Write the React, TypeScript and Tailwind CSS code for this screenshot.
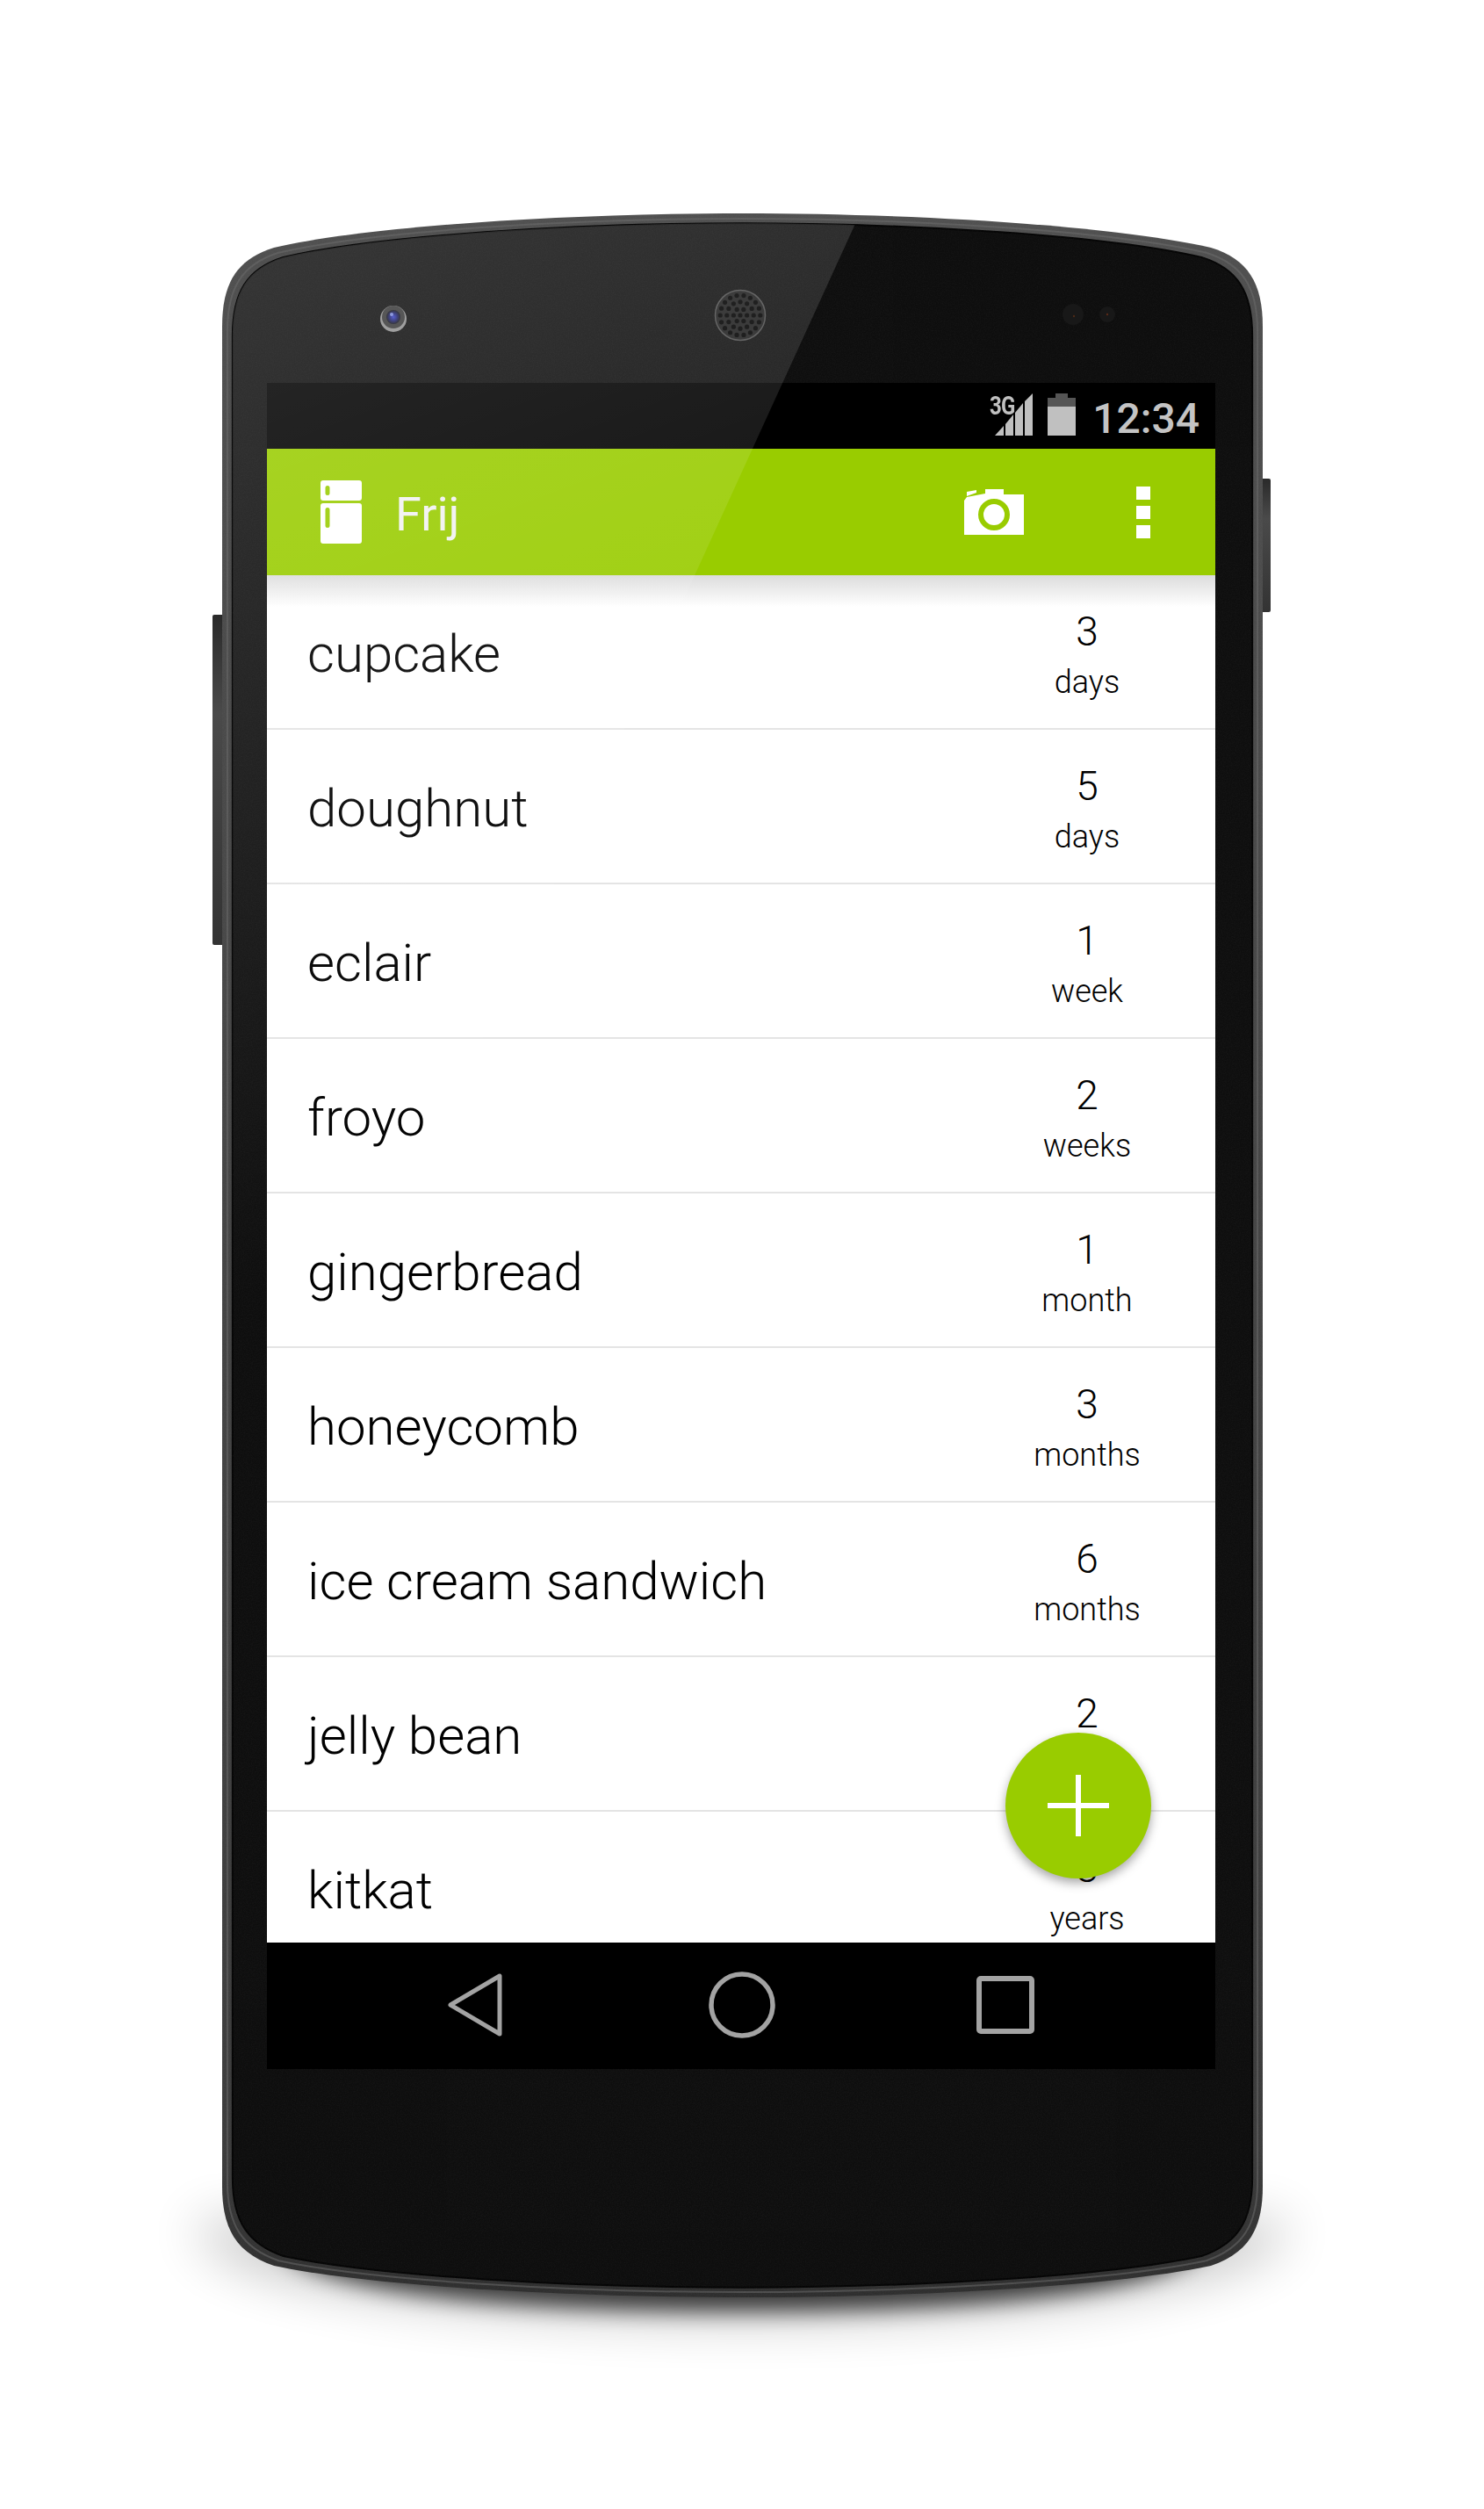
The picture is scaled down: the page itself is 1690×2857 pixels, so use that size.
const items = [
  { name: "cupcake", num: "3", unit: "days" },
  { name: "doughnut", num: "5", unit: "days" },
  { name: "eclair", num: "1", unit: "week" },
  { name: "froyo", num: "2", unit: "weeks" },
  { name: "gingerbread", num: "1", unit: "month" },
  { name: "honeycomb", num: "3", unit: "months" },
  { name: "ice cream sandwich", num: "6", unit: "months" },
  { name: "jelly bean", num: "2", unit: "years" },
  { name: "kitkat", num: "3", unit: "years" },
]

const OUTLINE =
  "M253 372 C253 322 270 295 312 282 C420 257 650 243 845.5 243 C1041 243 1271 257 1379 282 C1421 295 1438 322 1438 372 L1438 2490 C1438 2540 1420 2566 1379 2580 C1271 2603 1041 2616 845.5 2616 C650 2616 420 2603 312 2580 C271 2566 253 2540 253 2490 Z"
const INNER = "translate(845.5 1429.5) scale(0.98 0.9905) translate(-845.5 -1429.5)"
const MID = "translate(845.5 1429.5) scale(0.99 0.995) translate(-845.5 -1429.5)"

function speakerHoles() {
  const holes = [{ x: 843, y: 359 }]
  ;[7.6, 15.2, 22.8].forEach((r, i) => {
    const n = (i + 1) * 6
    for (let k = 0; k < n; k++) {
      const a = (k / n) * Math.PI * 2
      holes.push({ x: 843 + r * Math.cos(a), y: 359 + r * Math.sin(a) })
    }
  })
  return holes
}

function PhoneShell() {
  return (
    <svg className="absolute inset-0" width="1690" height="2857" viewBox="0 0 1690 2857">
      <defs>
        <linearGradient id="rim" x1="0" y1="0" x2="0" y2="1">
          <stop offset="0" stopColor="#505050" />
          <stop offset="0.5" stopColor="#444444" />
          <stop offset="0.93" stopColor="#3c3c3c" />
          <stop offset="1" stopColor="#2e2e2e" />
        </linearGradient>
        <linearGradient id="btn" x1="0" y1="0" x2="0" y2="1">
          <stop offset="0" stopColor="#2a2a2a" />
          <stop offset="0.3" stopColor="#4a4a4a" />
          <stop offset="1" stopColor="#333333" />
        </linearGradient>
        <radialGradient id="lens">
          <stop offset="0" stopColor="#3d46c8" />
          <stop offset="0.55" stopColor="#20246e" />
          <stop offset="1" stopColor="#15151c" />
        </radialGradient>
        <filter id="soft" x="-20%" y="-100%" width="140%" height="300%">
          <feGaussianBlur stdDeviation="12" />
        </filter>
        <filter id="softer" x="-20%" y="-100%" width="140%" height="300%">
          <feGaussianBlur stdDeviation="30" />
        </filter>
        <filter id="grain" x="0" y="0" width="100%" height="100%">
          <feTurbulence type="fractalNoise" baseFrequency="0.8" numOctaves="2" seed="4" />
          <feColorMatrix values="0 0 0 0 1  0 0 0 0 1  0 0 0 0 1  1.4 0 0 0 -0.45" />
        </filter>
        <clipPath id="faceClip">
          <path d={OUTLINE} />
        </clipPath>
      </defs>

      {/* shadow */}
      <path
        d="M225 2530 L1465 2530 C1480 2590 1200 2640 845 2640 C490 2640 210 2590 225 2530 Z"
        fill="#000"
        opacity="0.24"
        filter="url(#softer)"
      />
      <path
        d="M320 2540 L1370 2540 C1390 2595 1200 2632 845 2632 C490 2632 300 2595 320 2540 Z"
        fill="#000"
        opacity="0.7"
        filter="url(#soft)"
      />

      {/* side buttons */}
      <rect x="242" y="700" width="14" height="376" rx="2" fill="url(#btn)" />
      <rect x="1435" y="545" width="12" height="152" rx="2" fill="url(#btn)" />

      <path d={OUTLINE} fill="url(#rim)" />
      <path d={OUTLINE} transform={MID} fill="none" stroke="#6e6e6e" strokeWidth="2" opacity="0.5" />
      <path d={OUTLINE} transform={INNER} fill="#0e0e0e" stroke="#050505" strokeWidth="2" />
      <rect x="253" y="243" width="1185" height="2373" filter="url(#grain)" opacity="0.04" clipPath="url(#faceClip)" />

      {/* front camera */}
      <circle cx="448" cy="363" r="15" fill="#8f8f8f" />
      <circle cx="448" cy="361" r="13" fill="#3a3a3a" />
      <circle cx="448" cy="361" r="8" fill="url(#lens)" />
      <circle cx="446" cy="358" r="2" fill="#9fb0ff" opacity="0.7" />

      {/* speaker */}
      <circle cx="843" cy="359" r="28.5" fill="#202020" stroke="#505050" strokeWidth="1.5" />
      {speakerHoles().map((h, i) => (
        <circle key={i} cx={h.x} cy={h.y} r="2.6" fill="#000" />
      ))}

      {/* sensors */}
      <circle cx="1222" cy="358" r="12" fill="#181818" />
      <circle cx="1223" cy="360" r="1.2" fill="#4d2a18" />
      <circle cx="1261" cy="358" r="9" fill="#181818" />
      <circle cx="1261" cy="358" r="1.2" fill="#5a2a18" />
    </svg>
  )
}

function Glare() {
  return (
    <svg className="absolute inset-0 pointer-events-none" width="1690" height="2857" viewBox="0 0 1690 2857">
      <defs>
        <linearGradient id="glass" gradientUnits="userSpaceOnUse" x1="250" y1="250" x2="800" y2="1700">
          <stop offset="0" stopColor="#fff" stopOpacity="0.17" />
          <stop offset="0.75" stopColor="#fff" stopOpacity="0" />
        </linearGradient>
        <clipPath id="face">
          <path d={OUTLINE} transform={INNER} />
        </clipPath>
      </defs>
      <polygon points="200,200 999,200 268,1800 200,1800" fill="url(#glass)" clipPath="url(#face)" />
    </svg>
  )
}

function StatusBar() {
  return (
    <div className="h-[75px] bg-black flex justify-end items-start relative">
      <div className="absolute left-[823px] top-[11px] origin-left scale-x-[0.8] text-[#c0c0c0] text-[30px] leading-[30px] font-bold tracking-[-1px]">
        3G
      </div>
      <svg className="mt-[12px]" width="43" height="48" viewBox="0 0 43 48" fill="#c0c0c0">
        <polygon points="0,48 10,37 10,48" />
        <polygon points="12,35 21,24 21,48 12,48" />
        <polygon points="23,22 32,11 32,48 23,48" />
        <polygon points="34,9 43,0 43,48 34,48" />
      </svg>
      <svg className="mt-[12px] ml-[17px]" width="32" height="48" viewBox="0 0 32 48">
        <polygon points="9,0 23,0 23,5 32,5 32,15 0,15 0,5 9,5" fill="#555555" />
        <rect x="0" y="15" width="32" height="33" fill="#c0c0c0" />
      </svg>
      <div className="ml-[19px] mr-[18px] mt-[13px] text-[48px] leading-[56px] font-medium text-[#c4c4c4]">12:34</div>
    </div>
  )
}

function Toolbar() {
  return (
    <div className="h-[144px] bg-[#99cc00] flex items-center">
      <svg className="ml-[61px]" width="47" height="72" viewBox="0 0 47 72">
        <path
          fillRule="evenodd"
          fill="#fff"
          d="M3 0H44a3 3 0 0 1 3 3V20a3 3 0 0 1-3 3H3a3 3 0 0 1-3-3V3a3 3 0 0 1 3-3Z M8 6a2.5 2.5 0 0 0-2.5 2.5V14.5a2.5 2.5 0 0 0 5 0V8.5A2.5 2.5 0 0 0 8 6Z M3 26H44a3 3 0 0 1 3 3V69a3 3 0 0 1-3 3H3a3 3 0 0 1-3-3V29a3 3 0 0 1 3-3Z M8 31a2.5 2.5 0 0 0-2.5 2.5V51.5a2.5 2.5 0 0 0 5 0V33.5A2.5 2.5 0 0 0 8 31Z"
        />
      </svg>
      <div className="ml-[38px] pt-[5px] text-[54px] leading-[60px] text-[#f2f2f2]">Frij</div>
      <svg className="ml-auto" width="68" height="52" viewBox="0 0 68 52">
        <polygon points="0,13 3,9 24,5 24,0 45,0 45,6 68,6 68,52 0,52" fill="#fff" />
        <polygon points="3,3 14,1 14,4 3,8" fill="#fff" />
        <circle cx="34" cy="29" r="15" fill="#fff" stroke="#99cc00" strokeWidth="6" />
      </svg>
      <div className="ml-[128px] mr-[74px] flex flex-col gap-[7px]">
        <div className="w-[16px] h-[15px] bg-white" />
        <div className="w-[16px] h-[15px] bg-white" />
        <div className="w-[16px] h-[15px] bg-white" />
      </div>
    </div>
  )
}

function Row({ name, num, unit }: { name: string; num: string; unit: string }) {
  return (
    <div className="h-[176px] shrink-0 border-b-2 border-[#e4e4e4] flex items-center bg-white">
      <div className="flex-1 pl-[46px] pt-[5px] text-[60px] leading-[70px] font-light text-black">{name}</div>
      <div className="w-[240px] mr-[26px] pt-[12px] flex flex-col items-center font-light text-black">
        <div className="text-[46px] leading-[54px]">{num}</div>
        <div className="text-[36px] leading-[54px] mt-[4px]">{unit}</div>
      </div>
    </div>
  )
}

function NavBar() {
  return (
    <div className="h-[144px] bg-black flex items-center pl-[206px] pb-[3px]">
      <svg width="62" height="72" viewBox="0 0 62 72" fill="none" stroke="#a3a3a3" strokeWidth="5" strokeLinejoin="round">
        <polygon points="3,36 59,3 59,69" />
      </svg>
      <svg className="ml-[235px]" width="76" height="76" viewBox="0 0 76 76" fill="none" stroke="#a3a3a3" strokeWidth="5.5">
        <circle cx="38" cy="38" r="35" />
      </svg>
      <svg className="ml-[229px]" width="66" height="66" viewBox="0 0 66 66" fill="none" stroke="#a3a3a3" strokeWidth="6">
        <rect x="3" y="3" width="60" height="60" rx="2" />
      </svg>
    </div>
  )
}

export default function App() {
  return (
    <div className="relative w-[1690px] h-[2857px] bg-white overflow-hidden font-['Roboto',sans-serif]">
      <PhoneShell />

      <div className="relative ml-[304px] pt-[436px] w-[1080px]">
        <StatusBar />
        <Toolbar />

        <div className="relative h-[1557px] overflow-hidden flex flex-col bg-white">
          {items.map((item) => (
            <Row key={item.name} name={item.name} num={item.num} unit={item.unit} />
          ))}

          {/* shadow under the action bar */}
          <div className="absolute top-0 left-0 right-0 h-[36px] bg-gradient-to-b from-[#dcdcdc] to-transparent" />

          <div className="absolute right-[73px] bottom-[73px] w-[166px] h-[166px] rounded-full bg-[#99cc00] shadow-[0_5px_12px_rgba(0,0,0,0.35)] flex items-center justify-center">
            <svg width="70" height="70" viewBox="0 0 70 70" fill="#fff">
              <rect x="32" y="0" width="6" height="70" />
              <rect x="0" y="32" width="70" height="6" />
            </svg>
          </div>
        </div>

        <NavBar />
      </div>

      <Glare />
    </div>
  )
}
